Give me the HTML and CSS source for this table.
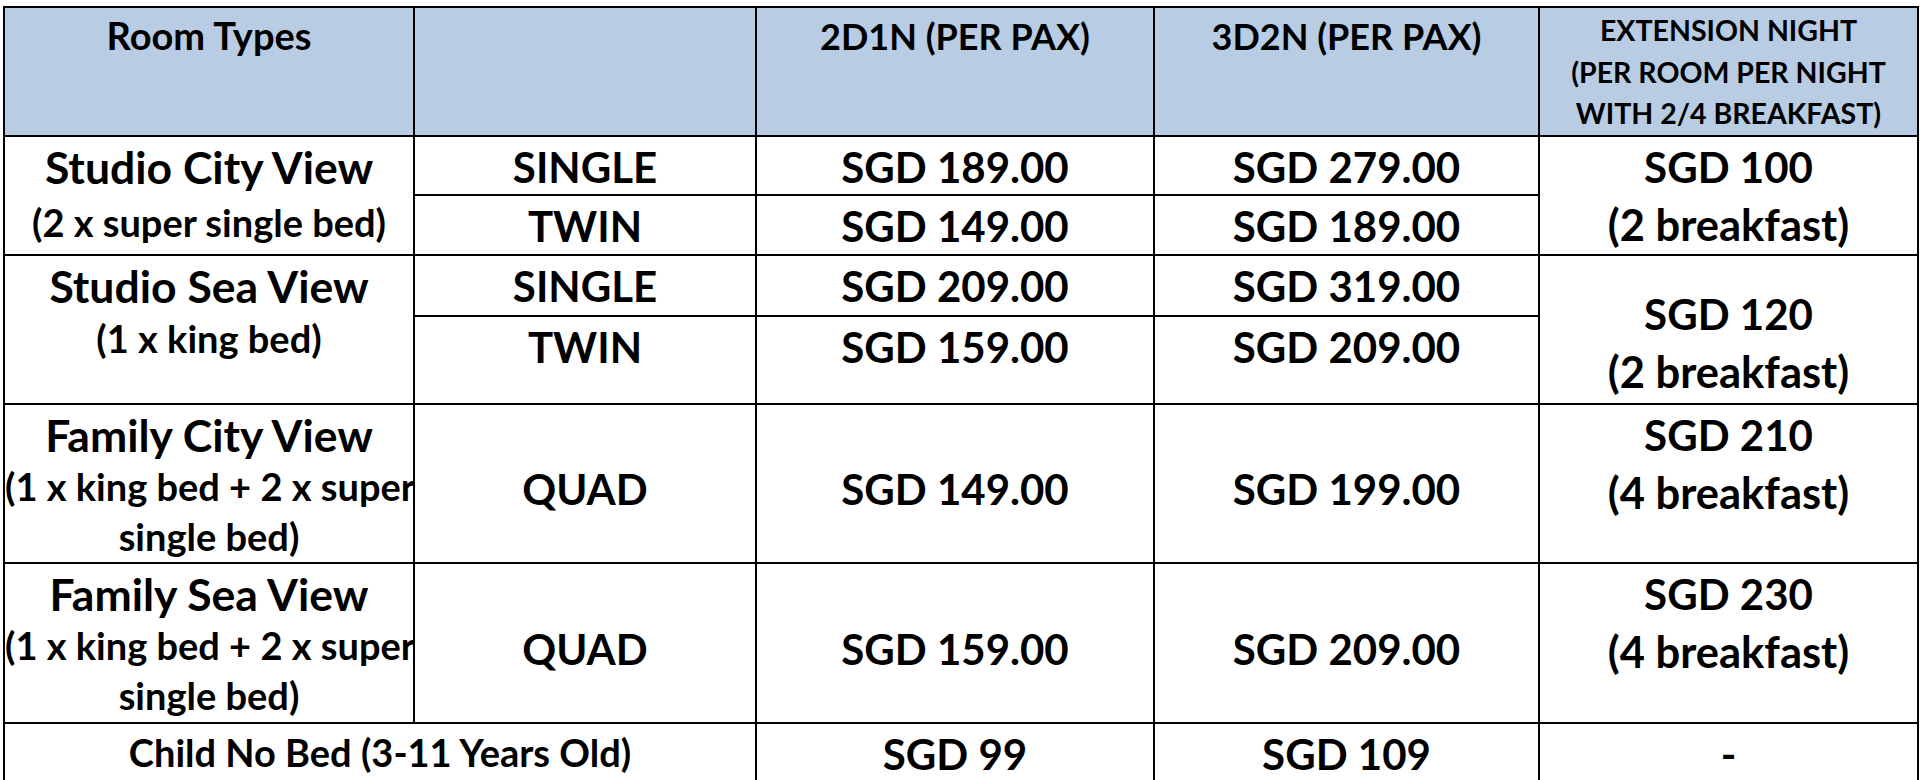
FILE: index.html
```html
<!DOCTYPE html>
<html lang="en">
<head>
<meta charset="utf-8">
<title>Room Rates</title>
<link rel="stylesheet" href="styles.css">
</head>
<body>
<div class="page">
  <table class="rates">
    <colgroup>
      <col class="c1"><col class="c2"><col class="c3"><col class="c4"><col class="c5">
    </colgroup>
    <thead>
      <tr class="r-head">
        <th class="h-main h-room">Room Types</th>
        <th class="h-main"></th>
        <th class="h-main">2D1N (PER PAX)</th>
        <th class="h-main">3D2N (PER PAX)</th>
        <th class="h-ext">EXTENSION NIGHT<br>(PER ROOM PER NIGHT<br>WITH 2/4 BREAKFAST)</th>
      </tr>
    </thead>
    <tbody>
      <tr class="r1">
        <td rowspan="2" class="room studio"><div class="title">Studio City View</div><div class="sub">(2 x super single bed)</div></td>
        <td>SINGLE</td>
        <td>SGD 189.00</td>
        <td>SGD 279.00</td>
        <td rowspan="2" class="ext"><div>SGD 100</div><div class="bf">(2 breakfast)</div></td>
      </tr>
      <tr class="r2">
        <td>TWIN</td>
        <td>SGD 149.00</td>
        <td>SGD 189.00</td>
      </tr>
      <tr class="r3">
        <td rowspan="2" class="room studio studio-sea"><div class="title">Studio Sea View</div><div class="sub">(1 x king bed)</div></td>
        <td>SINGLE</td>
        <td>SGD 209.00</td>
        <td>SGD 319.00</td>
        <td rowspan="2" class="ext ext-low"><div>SGD 120</div><div class="bf">(2 breakfast)</div></td>
      </tr>
      <tr class="r4">
        <td>TWIN</td>
        <td>SGD 159.00</td>
        <td>SGD 209.00</td>
      </tr>
      <tr class="r5">
        <td class="room family"><div class="title">Family City View</div><div class="sub">(1 x king bed + 2 x super<br>single bed)</div></td>
        <td class="mid">QUAD</td>
        <td class="mid">SGD 149.00</td>
        <td class="mid">SGD 199.00</td>
        <td class="ext"><div>SGD 210</div><div class="bf">(4 breakfast)</div></td>
      </tr>
      <tr class="r6">
        <td class="room family"><div class="title">Family Sea View</div><div class="sub">(1 x king bed + 2 x super<br>single bed)</div></td>
        <td class="mid">QUAD</td>
        <td class="mid">SGD 159.00</td>
        <td class="mid">SGD 209.00</td>
        <td class="ext"><div>SGD 230</div><div class="bf">(4 breakfast)</div></td>
      </tr>
      <tr class="r7">
        <td colspan="2" class="child">Child No Bed (3-11 Years Old)</td>
        <td>SGD 99</td>
        <td>SGD 109</td>
        <td>-</td>
      </tr>
    </tbody>
  </table>
</div>
</body>
</html>
```
FILE: styles.css
```css
html, body {
  margin: 0;
  padding: 0;
  overflow: hidden;
  background: #ffffff;
}

body {
  font-family: Lato, "Open Sans", "Liberation Sans", sans-serif;
  color: #000000;
}

.page {
  padding: 6px 0 0 3px;
}

.rates {
  border-collapse: separate;
  border-spacing: 0;
  table-layout: fixed;
  width: 1916px;
  border-left: 2px solid #000;
  border-top: 2px solid #000;
}

.c1 { width: 410px; }
.c2 { width: 342px; }
.c3 { width: 398px; }
.c4 { width: 385px; }
.c5 { width: 379px; }

.rates th,
.rates td {
  border-right: 2px solid #000;
  border-bottom: 2px solid #000;
  padding: 3px 0 0 0;
  text-align: center;
  vertical-align: top;
  font-weight: 700;
  font-size: 42px;
  line-height: 54px;
  white-space: nowrap;
  overflow: hidden;
}

.rates th {
  background: #b8cce4;
}

.r-head { height: 127px; }
.r1 { height: 59px; }
.r2 { height: 60px; }
.r3 { height: 61px; }
.r4 { height: 88px; }
.r5 { height: 159px; }
.r6 { height: 160px; }
.r7 { height: 62px; }

.rates th.h-main {
  font-size: 36px;
  line-height: 44px;
  padding-top: 6px;
}

.rates th.h-room {
  font-size: 38px;
  padding-top: 5px;
}

.rates th.h-ext {
  font-size: 28.5px;
  line-height: 41.5px;
  padding-top: 2px;
}

.rates td.room {
  padding-top: 4px;
}

.title {
  font-size: 44.5px;
  line-height: 52px;
}

.sub {
  font-size: 38px;
  line-height: 50px;
}

.studio .sub {
  line-height: 58px;
}

.studio-sea .sub {
  line-height: 52px;
}

.rates td.ext {
  line-height: 57px;
  padding-top: 2px;
}

.rates td.ext-low {
  padding-top: 30px;
}

.bf {
  font-size: 43.5px;
}

.rates td.mid {
  vertical-align: middle;
  padding-top: 12px;
}

.rates td.child {
  font-size: 38px;
  padding-top: 1px;
}
```
